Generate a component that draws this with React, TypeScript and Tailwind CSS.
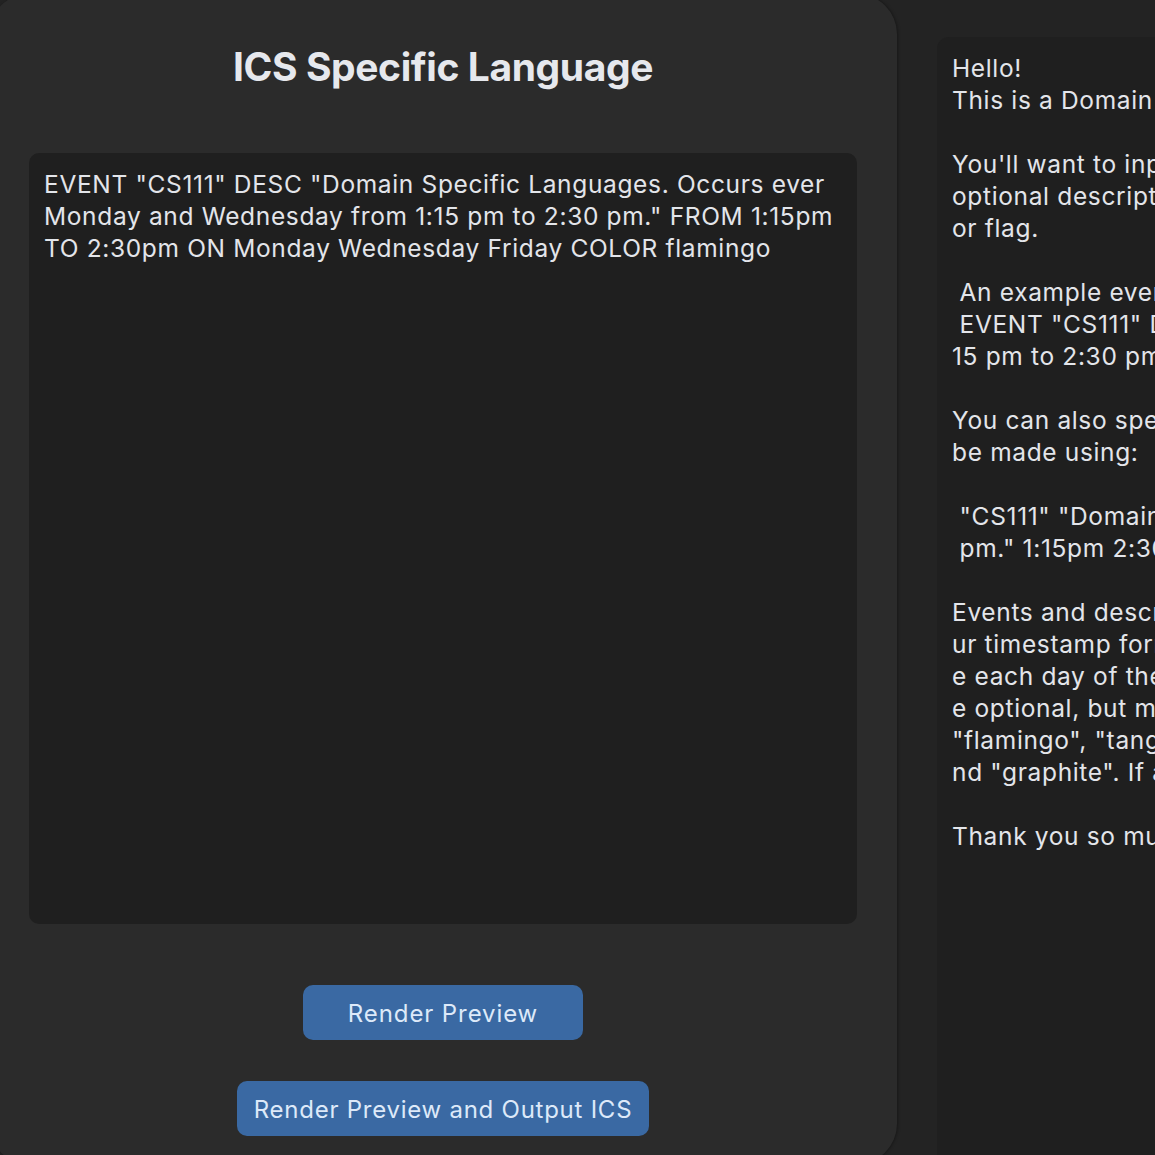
import React from "react";

const rightLines = [
  "Hello!",
  "This is a Domain Specific Language for creating calendar events.",
  "",
  "You'll want to input an event name in quotes, followed by an",
  "optional description, a start time, an end time, days of the week,",
  "or flag.",
  "",
  " An example event would look like:",
  " EVENT \"CS111\" DESC \"Domain Specific Languages. Occurs every Monday from 1:",
  "15 pm to 2:30 pm.\" FROM 1:15pm TO 2:30pm ON Monday Wednesday",
  "",
  "You can also specify events without keywords, which can",
  "be made using:",
  "",
  " \"CS111\" \"Domain Specific Languages. Occurs every Monday from 1:15 pm to 2:30",
  " pm.\" 1:15pm 2:30pm Monday Wednesday",
  "",
  "Events and descriptions must be in quotes. Times must follow o",
  "ur timestamp format. Days must be written out in full. Includ",
  "e each day of the week the event occurs on. Colors ar",
  "e optional, but must be one of the following: \"tomato\",",
  "\"flamingo\", \"tangerine\", \"banana\", \"sage\", \"basil\", a",
  "nd \"graphite\". If a color is not specified, the default is used.",
  "",
  "Thank you so much for using our language!",
];

export default function App() {
  return (
    <div
      className="w-[1155px] h-[1155px] overflow-hidden bg-[#232323] flex text-[#e3e5ea]"
      style={{ fontFamily: "Inter, 'Noto Sans', sans-serif" }}
    >
      <div className="shrink-0 w-[908px] h-[1170px] -ml-[11px] -mt-[6px] rounded-[40px] bg-[#2b2b2b] shadow-[1px_0_3px_rgba(0,0,0,0.35)] flex flex-col items-center">
        <h1 className="mt-[49px] text-[39px] leading-[48px] font-bold tracking-[-0.4px] text-[#e6e8ed]">
          ICS Specific Language
        </h1>
        <div className="mt-[62px] w-[828px] h-[771px] rounded-[10px] bg-[#1f1f1f] px-[15px] pt-[15px] text-[24.5px] leading-[32px] tracking-[0.65px] text-[#e3e5ea]">
          <div>EVENT "CS111" DESC "Domain Specific Languages. Occurs ever</div>
          <div>Monday and Wednesday from 1:15 pm to 2:30 pm." FROM 1:15pm</div>
          <div>TO 2:30pm ON Monday Wednesday Friday COLOR flamingo</div>
        </div>
        <button className="mt-[61px] w-[280px] h-[55px] pt-[3px] rounded-[10px] bg-[#3a69a3] text-[24px] tracking-[0.9px] text-[#dde9f9]">
          Render Preview
        </button>
        <button className="mt-[41px] w-[412px] h-[55px] pt-[3px] rounded-[10px] bg-[#3a69a3] text-[24px] tracking-[0.75px] text-[#dde9f9]">
          Render Preview and Output ICS
        </button>
      </div>
      <div className="flex-1 pl-[40px] pt-[37px]">
        <div className="h-[1140px] rounded-[12px] bg-[#1f1f1f] pl-[15px] pt-[15px] overflow-hidden text-[24.5px] leading-[32px] tracking-[0.65px] text-[#e3e5ea]">
          {rightLines.map((l, i) => (
            <div key={i} className="whitespace-pre h-[32px]">
              {l}
            </div>
          ))}
        </div>
      </div>
    </div>
  );
}
